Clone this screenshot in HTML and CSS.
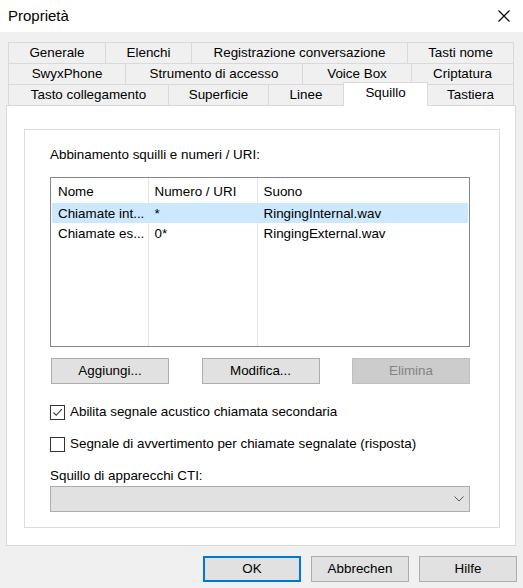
FILE: index.html
```html
<!DOCTYPE html>
<html lang="it">
<head>
<meta charset="utf-8">
<title>Proprietà</title>
<link rel="stylesheet" href="styles.css">
</head>
<body>
<div class="window">
  <div class="titlebar">
    <span class="title">Proprietà</span>
    <svg class="close" width="12" height="12" viewBox="0 0 12 12"><path d="M0.5 0.5 L11.5 11.5 M11.5 0.5 L0.5 11.5" stroke="#000" stroke-width="1.1" fill="none"/></svg>
  </div>
  <div class="dialog">
    <div class="tabs">
      <div class="tabrow">
        <div class="tab t-generale">Generale</div>
        <div class="tab t-elenchi">Elenchi</div>
        <div class="tab t-reg">Registrazione conversazione</div>
        <div class="tab t-tasti">Tasti nome</div>
      </div>
      <div class="tabrow">
        <div class="tab t-swyx">SwyxPhone</div>
        <div class="tab t-strum">Strumento di accesso</div>
        <div class="tab t-voice">Voice Box</div>
        <div class="tab t-cript">Criptatura</div>
      </div>
      <div class="tabrow">
        <div class="tab t-tasto">Tasto collegamento</div>
        <div class="tab t-sup">Superficie</div>
        <div class="tab t-linee">Linee</div>
        <div class="tab t-squillo active">Squillo</div>
        <div class="tab t-tastiera">Tastiera</div>
      </div>
    </div>
    <div class="panel">
      <div class="group">
        <div class="label">Abbinamento squilli e numeri / URI:</div>
        <div class="listbox">
          <table class="list">
            <tr class="head"><td>Nome</td><td>Numero / URI</td><td>Suono</td></tr>
            <tr class="row selected"><td>Chiamate int...</td><td>*</td><td>RingingInternal.wav</td></tr>
            <tr class="row"><td>Chiamate es...</td><td>0*</td><td>RingingExternal.wav</td></tr>
            <tr class="filler"><td></td><td></td><td></td></tr>
          </table>
        </div>
        <div class="btnrow">
          <div class="btn">Aggiungi...</div>
          <div class="btn">Modifica...</div>
          <div class="btn disabled">Elimina</div>
        </div>
        <div class="check first">
          <span class="box"><svg width="13" height="13" viewBox="0 0 13 13"><path d="M2.5 6.5 L5.2 9.3 L10.8 3.2" stroke="#333" stroke-width="1.1" fill="none"/></svg></span>
          <span>Abilita segnale acustico chiamata secondaria</span>
        </div>
        <div class="check">
          <span class="box"></span>
          <span>Segnale di avvertimento per chiamate segnalate (risposta)</span>
        </div>
        <div class="label cti">Squillo di apparecchi CTI:</div>
        <div class="combo">
          <svg width="10" height="6" viewBox="0 0 10 6"><path d="M0.5 0.5 L5 5 L9.5 0.5" stroke="#555" stroke-width="1" fill="none"/></svg>
        </div>
      </div>
    </div>
    <div class="footer">
      <div class="btn fbtn default">OK</div>
      <div class="btn fbtn">Abbrechen</div>
      <div class="btn fbtn">Hilfe</div>
    </div>
  </div>
</div>
</body>
</html>
```
FILE: styles.css
```css
* { box-sizing: border-box; }
html, body { margin: 0; padding: 0; }
body {
  width: 523px;
  height: 588px;
  background: #f0f0f0;
  font-family: "Liberation Sans", Arial, sans-serif;
  font-size: 13.4px;
  color: #000;
  overflow: hidden;
}
.titlebar {
  height: 32px;
  background: #fff;
  display: flex;
  align-items: center;
  justify-content: space-between;
  padding: 0 13px 2px 8px;
}
.title { font-size: 15px; }
.close { display: block; margin-top: 2px; }
.dialog { padding-left: 6px; }
.tabs { margin: 10px 0 0 2px; width: 506px; }
.tabrow { display: flex; height: 21px; align-items: flex-start; }
.tab {
  height: 21px;
  line-height: 20px;
  text-align: center;
  border: 1px solid #d9d9d9;
  border-bottom: none;
  margin-left: -1px;
  background: #f0f0f0;
  white-space: nowrap;
}
.tab:first-child { margin-left: 0; }
.tab.active {
  background: #fff;
  height: 24px;
  margin-top: -2px;
  line-height: 20px;
  position: relative;
  z-index: 1;
}
.t-generale { width: 98px; }
.t-elenchi { width: 87px; }
.t-reg { width: 217px; }
.t-tasti { width: 107px; }
.t-swyx { width: 118px; }
.t-strum { width: 178px; }
.t-voice { width: 110px; }
.t-cript { width: 103px; }
.t-tasto { width: 161px; }
.t-sup { width: 101px; }
.t-linee { width: 76px; }
.t-squillo { width: 85px; }
.t-tastiera { width: 87px; }

.panel {
  width: 510px;
  height: 441px;
  background: #fff;
  border: 1px solid #d9d9d9;
  padding: 23px 15px 17px 17px;
  display: flex;
  flex-direction: column;
}
.group {
  flex: 1;
  border: 1px solid #dcdcdc;
  padding: 17px 29px 15px 25px;
  display: flex;
  flex-direction: column;
}
.label { line-height: 16px; height: 16px; white-space: nowrap; }
.listbox {
  margin-top: 14px;
  height: 170px;
  border: 1px solid #828790;
  padding: 0 1px;
  background: #fff;
}
.list {
  width: 100%;
  height: 100%;
  border-collapse: collapse;
  table-layout: fixed;
}
.list td {
  padding: 0 0 0 6px;
  white-space: nowrap;
  overflow: hidden;
  border-right: 1px solid #e5e5e5;
  vertical-align: middle;
}
.list td:first-child { width: 96px; }
.list td:nth-child(2) { width: 109px; }
.list td:last-child { border-right: none; }
.list .head td { height: 25px; padding-top: 1px; }
.list .row td { height: 20px; }
.list .selected { background: #cce8ff; }
.list .selected td { border-right-color: #cce8ff; }
.list .filler td { height: auto; }

.btnrow {
  margin-top: 11px;
  padding-left: 1px;
  display: flex;
  justify-content: space-between;
}
.btn {
  width: 118px;
  height: 26px;
  line-height: 24px;
  text-align: center;
  background: #e1e1e1;
  border: 1px solid #adadad;
  white-space: nowrap;
}
.btn.disabled {
  background: #cccccc;
  border-color: #bfbfbf;
  color: #838383;
}
.check {
  display: flex;
  align-items: center;
  height: 16px;
  line-height: 16px;
  margin-top: 16px;
  white-space: nowrap;
}
.check.first { margin-top: 20px; }
.box {
  width: 15px;
  height: 15px;
  border: 1px solid #333;
  background: #fff;
  margin-right: 5px;
  display: flex;
  align-items: center;
  justify-content: center;
}
.box svg { display: block; }
.label.cti { margin-top: 16px; }
.combo {
  margin-top: 2px;
  height: 26px;
  background: #e1e1e1;
  border: 1px solid #adadad;
  display: flex;
  align-items: center;
  justify-content: flex-end;
  padding-right: 5px;
}
.combo svg { display: block; }

.footer {
  margin-top: 10px;
  padding-right: 6px;
  display: flex;
  justify-content: flex-end;
  gap: 10px;
}
.fbtn { width: 98px; }
.fbtn.default { border: 2px solid #0078d7; line-height: 22px; }
```
